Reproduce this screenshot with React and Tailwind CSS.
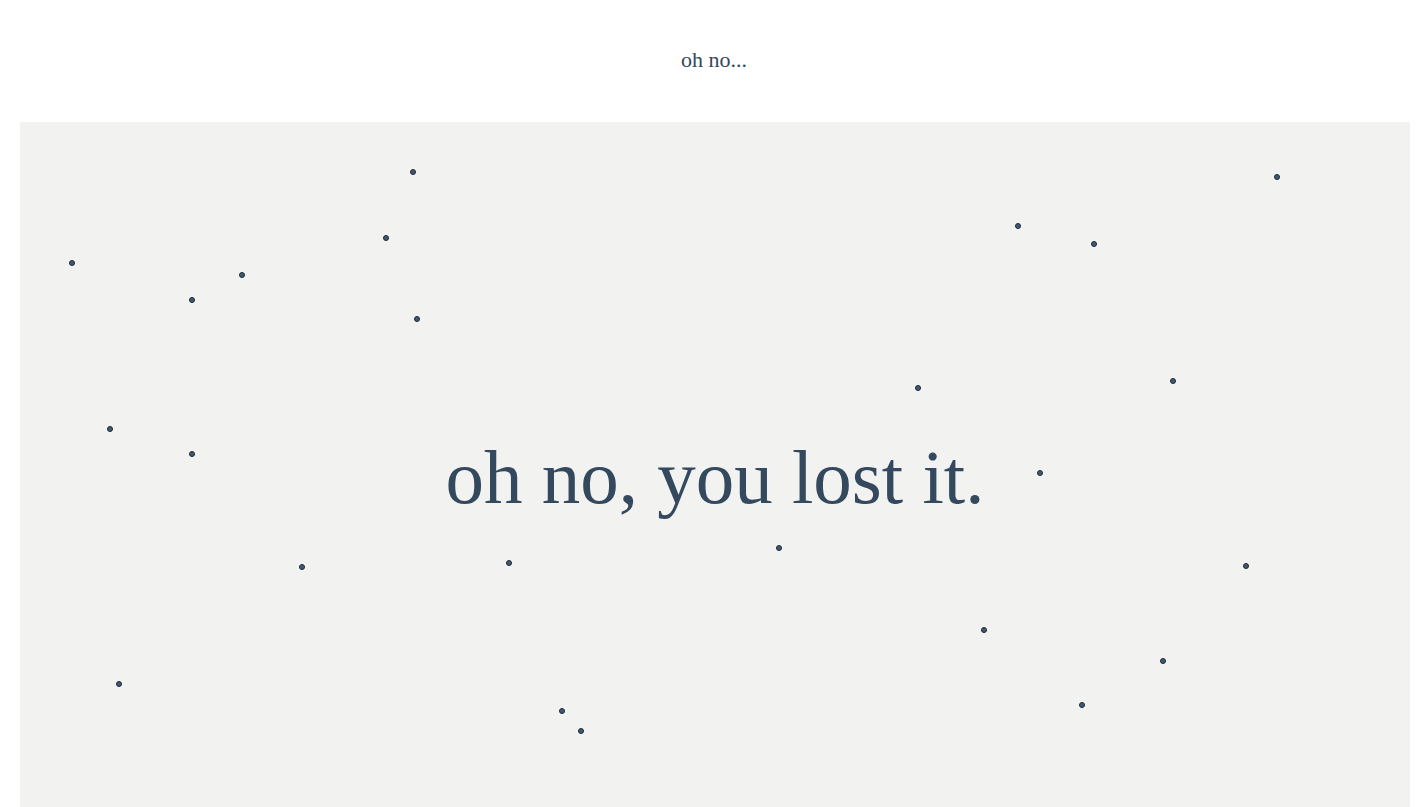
const dots = [
  [413, 172], [72, 263], [386, 238], [242, 275], [192, 300], [417, 319],
  [110, 429], [192, 454], [302, 567], [509, 563], [119, 684], [562, 711],
  [581, 731], [779, 548], [918, 388], [1018, 226], [1094, 244], [1277, 177],
  [1173, 381], [1040, 473], [1246, 566], [984, 630], [1163, 661], [1082, 705],
];

export default function App() {
  return (
    <div className="min-h-screen bg-white overflow-hidden" style={{ fontFamily: '"Liberation Serif", serif' }}>
      {/* Header */}
      <div className="h-[122px] flex items-center justify-center">
        <p className="text-[22px] text-[#34495e] -mt-[3px]">oh no...</p>
      </div>

      {/* Canvas */}
      <div className="relative ml-[20px] w-[1390px] h-[720px] bg-[#f2f2f1] flex items-center justify-center">
        {dots.map(([x, y], i) => (
          <span
            key={i}
            className="absolute w-[6px] h-[6px] rounded-full bg-[#3d5a78] border border-[#1f2630]"
            style={{ left: x - 20 - 3, top: y - 122 - 3 }}
          />
        ))}
        <h1 className="text-[77px] leading-none text-[#34495e] -mt-[10px]">oh no, you lost it.</h1>
      </div>
    </div>
  );
}
